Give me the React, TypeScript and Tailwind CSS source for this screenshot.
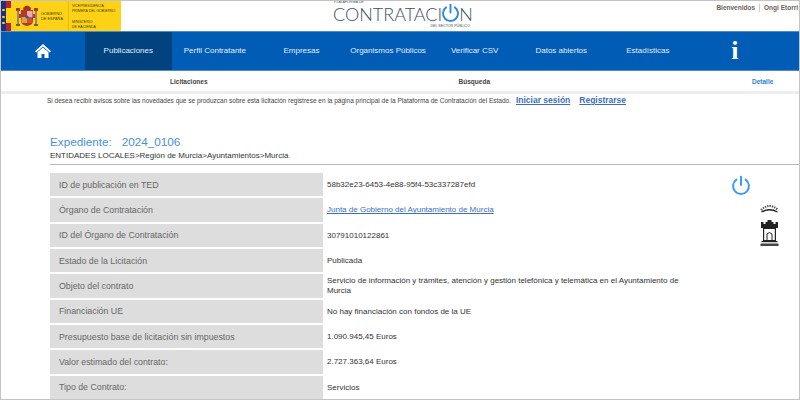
const font = "[font-family:'Liberation_Sans',Arial,sans-serif]"

const navItems = ['Publicaciones', 'Perfil Contratante', 'Empresas', 'Organismos Públicos', 'Verificar CSV', 'Datos abiertos', 'Estadísticas']

const rows = [
  { label: 'ID de publicación en TED', value: '58b32e23-6453-4e88-95f4-53c337287efd' },
  { label: 'Órgano de Contratación', value: 'Junta de Gobierno del Ayuntamiento de Murcia', link: true },
  { label: 'ID del Órgano de Contratación', value: '30791010122861' },
  { label: 'Estado de la Licitación', value: 'Publicada' },
  { label: 'Objeto del contrato', value: 'Servicio de información y trámites, atención y gestión telefónica y telemática en el Ayuntamiento de Murcia' },
  { label: 'Financiación UE', value: 'No hay financiación con fondos de la UE' },
  { label: 'Presupuesto base de licitación sin impuestos', value: '1.090.945,45 Euros' },
  { label: 'Valor estimado del contrato:', value: '2.727.363,64 Euros' },
  { label: 'Tipo de Contrato:', value: 'Servicios' },
]

function GovLogo() {
  return (
    <div className="flex h-[30px] w-[120px] shrink-0 bg-[#fcd116] text-[#4b4310]">
      <div className="flex w-[10px] shrink-0">
        <div className="relative w-[5px] bg-[#1f2f7a]">
          <span className="absolute left-[1px] top-[8px] h-[2px] w-[3px] rounded-full bg-[#fcd116]" />
          <span className="absolute left-[1px] top-[15px] h-[2px] w-[3px] rounded-full bg-[#fcd116]" />
          <span className="absolute left-[1px] top-[21px] h-[2px] w-[3px] rounded-full bg-[#fcd116]" />
        </div>
        <div className="flex w-[5px] flex-col">
          <div className="h-[7px] bg-[#b8232f]" />
          <div className="flex-1 bg-[#fcd116]" />
          <div className="h-[8px] bg-[#b8232f]" />
        </div>
      </div>
      <svg width="22" height="24" viewBox="0 0 22 24" className="ml-[5px] mt-[3px] shrink-0">
        <path d="M7 4 Q11 -1 15 4 L14.5 6 H7.5 Z" fill="#a5322a" />
        <path d="M5 6 H17 V17 Q17 21 11 22 Q5 21 5 17 Z" fill="#b5372c" />
        <rect x="11" y="7" width="5.5" height="6" fill="#e3aeb4" />
        <rect x="5.5" y="13" width="5.5" height="6" fill="#d7a63a" />
        <rect x="11" y="13" width="5" height="6" fill="#c9503c" />
        <circle cx="11" cy="13" r="1.6" fill="#3558a8" />
        <rect x="1" y="7" width="2" height="13" fill="#8f8a78" />
        <rect x="19" y="7" width="2" height="13" fill="#8f8a78" />
        <rect x="0" y="4" width="4" height="3" fill="#b5372c" />
        <rect x="18" y="4" width="4" height="3" fill="#b5372c" />
        <rect x="3" y="10" width="2" height="4" fill="#c0392b" />
        <rect x="17" y="10" width="2" height="4" fill="#c0392b" />
        <rect x="0" y="20" width="4" height="2" fill="#6c6238" />
        <rect x="18" y="20" width="4" height="2" fill="#6c6238" />
      </svg>
      <div className="ml-[3px] mt-[11px] w-[27px] shrink-0 whitespace-nowrap text-[3.9px] leading-[4.5px]">
        GOBIERNO<br />DE ESPAÑA
      </div>
      <div className="flex flex-col border-l border-[#e8bd10] pl-[3px] text-[3.5px] leading-[4.5px]">
        <div className="mt-[3px] whitespace-nowrap">VICEPRESIDENCIA<br />PRIMERA DEL GOBIERNO</div>
        <div className="mt-[7px] whitespace-nowrap">MINISTERIO<br />DE HACIENDA</div>
      </div>
    </div>
  )
}

function PowerIcon({ className, size }: { className?: string; size: number }) {
  return (
    <svg width={size} height={size} viewBox="0 0 24 24" fill="none" stroke="currentColor" strokeWidth="2.4" strokeLinecap="round" className={className}>
      <path d="M12 2 V12" />
      <path d="M6.5 5.5 A9.5 9.5 0 1 0 17.5 5.5" />
    </svg>
  )
}

function ContratacionLogo() {
  return (
    <div className="relative ml-[212px] h-[30px] w-[140px] text-[#3f4f63]">
      <div className="absolute left-[1px] top-[0px] whitespace-nowrap text-[3.6px] leading-[3px]">PLATAFORMA DE</div>
      <div className="absolute left-[0px] top-[4px] flex items-center font-['Lato'] text-[18px] font-light leading-[18px]">
        CONTRATACI
        <PowerIcon size={19} className="mx-[-1px] mt-[-3px] text-[#2f8bd8]" />
        N
      </div>
      <div className="absolute right-[3px] top-[23px] whitespace-nowrap text-[3.6px] leading-[4px]">DEL SECTOR PÚBLICO</div>
    </div>
  )
}

function TownCrest() {
  return (
    <svg width="19" height="43" viewBox="0 0 19 43">
      <path d="M1 7 Q9.5 -1 18 7" fill="none" stroke="#555" strokeWidth="2" strokeDasharray="1.4 1" />
      <path d="M1.5 9 Q9.5 4.5 17.5 9" fill="none" stroke="#222" strokeWidth="1.3" />
      <path d="M1 19 H3.5 V21 H5.5 V19 H7.5 V17 H11.5 V19 H13.5 V21 H15.5 V19 H18 V25 H1 Z" fill="#222" />
      <path d="M3 25 H16 V38 H3 Z M4.2 26 V37 H14.8 V26 Z" fill="#222" fillRule="evenodd" />
      <path d="M7 37 V31 Q9.5 28 12 31 V37" fill="none" stroke="#222" strokeWidth="1" />
      <rect x="1.5" y="38" width="16" height="1.2" fill="#222" />
      <rect x="0.5" y="40.5" width="18" height="2.5" fill="#444" />
    </svg>
  )
}

export default function App() {
  return (
    <div className={`h-[400px] w-[800px] overflow-hidden border border-[#c4c4c4] bg-white ${font}`}>
      <header className="flex h-[30px] items-start">
        <GovLogo />
        <ContratacionLogo />
        <div className="ml-auto mr-[1px] mt-[3px] flex text-[6.5px] font-bold leading-[8px] text-[#6b5f57]">
          <span>Bienvenidos</span>
          <span className="mx-[4px] border-l border-[#ccc]" />
          <span>Ongi Etorri</span>
        </div>
      </header>

      <nav className="grid h-[40px] grid-cols-[84px_repeat(7,86.6px)_1fr] border-y border-[#4d8cc9] bg-[#005cb4] text-[8px] text-[#e4eef8]">
        <div className="flex items-center justify-center">
          <svg width="16" height="14" viewBox="0 0 16 14" fill="white">
            <path d="M8 0 L16 7.2 L14.7 8.4 L8 2.4 L1.3 8.4 L0 7.2 Z" />
            <path d="M2.5 8.2 L8 3.4 L13.5 8.2 V14 H9.5 V10 H6.5 V14 H2.5 Z" />
          </svg>
        </div>
        {navItems.map((item, i) => (
          <div key={item} className={`flex items-center justify-center ${i === 0 ? 'bg-[#00437f]' : ''}`}>
            {item}
          </div>
        ))}
        <div className="flex items-center pl-[40px]">
          <span className="font-['Liberation_Serif'] text-[26px] font-bold leading-none text-white">i</span>
        </div>
      </nav>

      <div className="flex h-[20px] items-center pt-[1px] text-[6.5px] font-bold text-[#444]">
        <span className="ml-[169px]">Licitaciones</span>
        <span className="ml-[251px]">Búsqueda</span>
        <span className="ml-[262px] text-[#2f7fd0]">Detalle</span>
      </div>
      <div className="h-[3px] bg-[#eeeeee]" />

      <p className="ml-[46px] mt-[1px] flex h-[11px] items-center whitespace-nowrap text-[6.5px] text-[#444]">
        Si desea recibir avisos sobre las novedades que se produzcan sobre esta licitación registrese en la página principal de la Plataforma de Contratación del Estado.
        <a className="ml-[5px] text-[8.5px] font-bold text-[#3b6fc0] underline">Iniciar sesión</a>
        <a className="ml-[9px] text-[8.5px] font-bold text-[#3b6fc0] underline">Registrarse</a>
      </p>

      <div className="ml-[49px] mt-[28px]">
        <h1 className="flex gap-[10px] text-[11.7px] leading-[16px] text-[#4a90d9]">
          <span>Expediente:</span>
          <span>2024_0106</span>
        </h1>
        <div className="text-[8px] leading-[11px] text-[#333]">ENTIDADES LOCALES&gt;Región de Murcia&gt;Ayuntamientos&gt;Murcia</div>
        <div className="mt-[3px] h-[1px] bg-[#bbbbbb]" />
      </div>

      <main className="ml-[49px] mt-[8px] flex">
        <div className="grid w-[631px] shrink-0 grid-cols-[273px_1fr] auto-rows-[23.33px] gap-y-[2px]">
          {rows.map((row) => (
            <div key={row.label} className="contents">
              <div className="flex items-center bg-[#dddddd] pl-[9px] pt-[1px] text-[8.8px] text-[#666]">{row.label}</div>
              <div className={`flex items-center pl-[4px] pt-[1px] text-[8px] leading-[10px] ${row.link ? 'text-[#3b6fc0] underline' : 'text-[#333]'}`}>
                {row.value}
              </div>
            </div>
          ))}
        </div>
        <aside className="ml-[50px] flex flex-col">
          <PowerIcon size={20} className="mt-[2px] text-[#3d9bf5]" />
          <div className="ml-[29px] mt-[8px]">
            <TownCrest />
          </div>
        </aside>
      </main>
    </div>
  )
}
